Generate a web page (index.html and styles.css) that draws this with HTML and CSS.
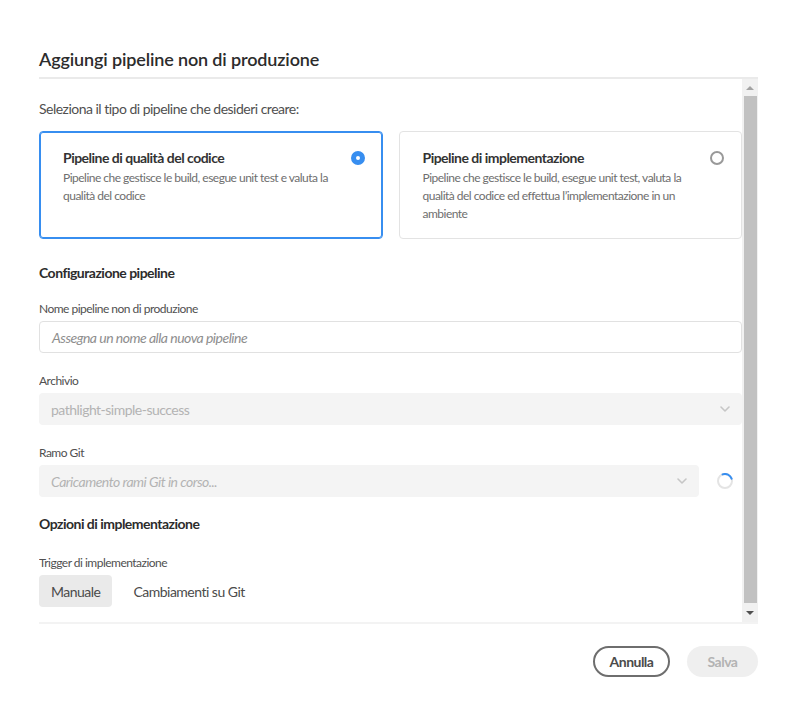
FILE: index.html
```html
<!DOCTYPE html>
<html lang="it">
<head>
<meta charset="utf-8">
<title>Aggiungi pipeline non di produzione</title>
<link rel="stylesheet" href="styles.css">
</head>
<body>
<div class="dialog">
  <h1 class="title">Aggiungi pipeline non di produzione</h1>
  <div class="divider"></div>
  <div class="scroll">
    <div class="content">
      <p class="intro">Seleziona il tipo di pipeline che desideri creare:</p>
      <div class="cards">
        <div class="card selected">
          <div class="card-text">
            <div class="card-title">Pipeline di qualità del codice</div>
            <div class="card-desc">Pipeline che gestisce le build, esegue unit test e valuta la qualità del codice</div>
          </div>
          <span class="radio on"></span>
        </div>
        <div class="card">
          <div class="card-text">
            <div class="card-title">Pipeline di implementazione</div>
            <div class="card-desc">Pipeline che gestisce le build, esegue unit test, valuta la qualità del codice ed effettua l’implementazione in un ambiente</div>
          </div>
          <span class="radio"></span>
        </div>
      </div>

      <h2 class="section">Configurazione pipeline</h2>
      <label class="label first">Nome pipeline non di produzione</label>
      <div class="input"><span class="placeholder">Assegna un nome alla nuova pipeline</span></div>

      <label class="label">Archivio</label>
      <div class="select"><span class="sel-text">pathlight-simple-success</span>
        <svg class="chev" width="10" height="6" viewBox="0 0 10 6"><path d="M1 1l4 4 4-4" fill="none" stroke="#c6c6c6" stroke-width="1.6" stroke-linecap="round" stroke-linejoin="round"/></svg>
      </div>

      <label class="label">Ramo Git</label>
      <div class="branch-row">
        <div class="select grow"><span class="sel-text italic">Caricamento rami Git in corso...</span>
          <svg class="chev" width="10" height="6" viewBox="0 0 10 6"><path d="M1 1l4 4 4-4" fill="none" stroke="#c6c6c6" stroke-width="1.6" stroke-linecap="round" stroke-linejoin="round"/></svg>
        </div>
        <svg class="spinner" width="16" height="16" viewBox="0 0 16 16">
          <circle cx="8" cy="8" r="7" fill="none" stroke="#e4e4e4" stroke-width="2"/>
          <path d="M5.6 1.4a7 7 0 0 1 9 4.3" fill="none" stroke="#378ef0" stroke-width="2" stroke-linecap="round"/>
        </svg>
      </div>

      <h2 class="section second">Opzioni di implementazione</h2>
      <label class="label trig">Trigger di implementazione</label>
      <div class="toggle-row">
        <span class="tbtn active">Manuale</span>
        <span class="tbtn">Cambiamenti su Git</span>
      </div>
    </div>
    <div class="scrollbar">
      <div class="arrow up"></div>
      <div class="thumb"></div>
      <div class="arrow down"></div>
    </div>
  </div>
  <div class="divider thin"></div>
  <div class="footer">
    <button class="btn outline">Annulla</button>
    <button class="btn disabled">Salva</button>
  </div>
</div>
</body>
</html>
```

FILE: styles.css
```css
* { box-sizing: border-box; }
html, body { margin: 0; padding: 0; background: #fff; }
body {
  font-family: "Lato", "Open Sans", sans-serif;
  color: #4b4b4b;
  letter-spacing: -0.032em;
}
.dialog {
  padding: 47px 39px 0 39px;
  width: 797px;
}
.title {
  margin: 0;
  font-size: 18px;
  line-height: 24px;
  font-weight: 600;
  color: #2c2c2c;
  height: 30px;
  letter-spacing: -0.008em;
}
.divider { height: 2px; background: #eaeaea; }
.divider.thin { height: 2px; background: #f3f3f3; }
.scroll {
  display: flex;
  height: 543px;
  overflow: hidden;
}
.content {
  flex: 1;
  padding-top: 20px;
}
.intro {
  margin: 0 0 12px 0;
  font-size: 14px;
  line-height: 20px;
  color: #505050;
}
.cards {
  display: grid;
  grid-template-columns: 1fr 1fr;
  gap: 16px;
}
.card {
  height: 108px;
  border: 1px solid #e3e3e3;
  border-radius: 4px;
  padding: 16px 17px 16px 23px;
  display: flex;
  gap: 14px;
}
.card.selected {
  border-color: #378ef0;
  box-shadow: inset 0 0 0 1px #378ef0;
}
.card-text { flex: 1; }
.card-title {
  font-size: 14px;
  line-height: 20px;
  font-weight: 700;
  color: #333;
}
.card-desc {
  font-size: 12px;
  line-height: 18px;
  color: #6e6e6e;
  margin-top: 1px;
}
.radio {
  flex: none;
  width: 14px;
  height: 14px;
  margin-top: 3px;
  border-radius: 50%;
  border: 2px solid #999;
}
.radio.on {
  border: 5px solid #378ef0;
  background: #fff;
}
.section {
  margin: 24px 0 0 0;
  font-size: 14px;
  line-height: 20px;
  font-weight: 700;
  color: #2c2c2c;
}
.section.second { margin-top: 17px; }
.label {
  display: block;
  font-size: 12px;
  line-height: 18px;
  color: #505050;
  margin: 19px 0 3px 0;
}
.label.first { margin-top: 17px; }
.label.trig { margin-top: 20px; }
.input {
  height: 32px;
  border: 1px solid #e1e1e1;
  border-radius: 4px;
  padding: 0 12px;
  display: flex;
  align-items: center;
}
.placeholder {
  font-style: italic;
  font-size: 14px;
  color: #8e8e8e;
}
.select {
  height: 32px;
  background: #f4f4f4;
  border-radius: 4px;
  padding: 0 12px;
  display: flex;
  align-items: center;
  justify-content: space-between;
}
.sel-text { font-size: 14px; color: #b3b3b3; }
.sel-text.italic { font-style: italic; }
.branch-row {
  display: flex;
  align-items: center;
  gap: 18px;
  padding-right: 9px;
}
.grow { flex: 1; }
.spinner { flex: none; }
.toggle-row {
  display: flex;
  gap: 9px;
  margin-top: 1px;
}
.tbtn {
  height: 32px;
  padding: 0 12px;
  display: flex;
  align-items: center;
  font-size: 14px;
  color: #4b4b4b;
  border-radius: 4px;
}
.tbtn.active { background: #eaeaea; }
.scrollbar {
  width: 16px;
  background: #f1f1f1;
  display: flex;
  flex-direction: column;
  align-items: center;
}
.arrow {
  height: 17px;
  width: 16px;
  display: flex;
  align-items: center;
  justify-content: center;
}
.arrow::after {
  content: "";
  width: 0;
  height: 0;
  border-left: 4px solid transparent;
  border-right: 4px solid transparent;
}
.arrow.up::after { border-bottom: 4px solid #a3a3a3; }
.arrow.down { height: 19px; }
.arrow.down::after { border-top: 4px solid #505050; }
.thumb {
  flex: 1;
  width: 13px;
  margin-left: 1px;
  background: #c1c1c1;
}
.footer {
  display: flex;
  justify-content: flex-end;
  gap: 17px;
  padding-top: 22px;
}
.btn {
  font-family: inherit;
  letter-spacing: inherit;
  height: 31px;
  border-radius: 16px;
  font-size: 14px;
  font-weight: 700;
  padding: 0 10px;
}
.outline {
  background: #fff;
  border: 2px solid #6e6e6e;
  color: #4b4b4b;
  width: 77px;
}
.disabled {
  background: #efefef;
  border: none;
  color: #b3b3b3;
  width: 71px;
}
```
